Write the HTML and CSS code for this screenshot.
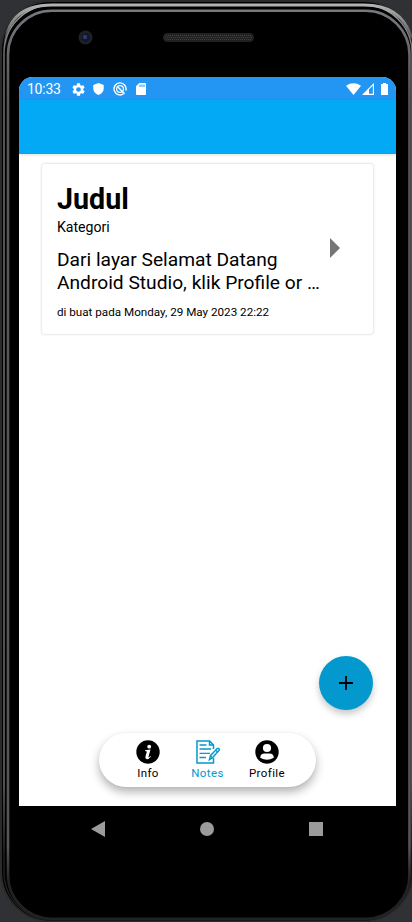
FILE: index.html
```
<!DOCTYPE html>
<html lang="id">
<head>
<meta charset="utf-8">
<meta name="viewport" content="width=device-width">
<title>Notes</title>
<link rel="stylesheet" href="styles.css">
</head>
<body>
<div class="device">
  <svg class="frame" viewBox="0 0 412 922" fill="none">
    <defs>
      <linearGradient id="metal" x1="0" y1="0" x2="0" y2="1">
        <stop offset="0" stop-color="#b9bbbb"/><stop offset=".02" stop-color="#8a8c8c"/><stop offset=".05" stop-color="#777975"/><stop offset=".85" stop-color="#74756f"/><stop offset=".93" stop-color="#222"/><stop offset="1" stop-color="#1c1c1c"/>
      </linearGradient>
      <linearGradient id="inner" x1="0" y1="0" x2="0" y2="1">
        <stop offset="0" stop-color="#77787e"/><stop offset=".1" stop-color="#55565c"/><stop offset=".92" stop-color="#55565c"/><stop offset=".96" stop-color="#222"/><stop offset="1" stop-color="#222"/>
      </linearGradient>
      <linearGradient id="shine" gradientUnits="userSpaceOnUse" x1="0" y1="50" x2="0" y2="4">
        <stop offset="0" stop-color="#777975" stop-opacity="0"/><stop offset=".5" stop-color="#777979"/><stop offset="1" stop-color="#b4b6b6"/>
      </linearGradient>
    </defs>
    <rect x="1" y="1" width="412" height="920.5" rx="50" fill="#000" stroke="#2b2b2b" stroke-width="2"/>
    <rect x="4" y="5" width="408" height="915" rx="48" stroke="url(#metal)" stroke-width="1.4"/>
    <path d="M4.5 52Q5 5 52 5H364Q402 5 411.5 38" stroke="url(#shine)" stroke-width="2.8"/>
    <rect x="8" y="10.7" width="401.5" height="908" rx="44" stroke="url(#inner)" stroke-width="2.6"/>
    <circle cx="85.5" cy="37.5" r="7" fill="#202022"/>
    <circle cx="85.5" cy="37.5" r="4.2" fill="#10162d"/>
    <circle cx="85" cy="37" r="2.2" fill="#2b3a70"/>
    <rect x="163" y="33" width="91" height="9" rx="4.5" fill="#222"/>
    <path d="M166 35.5H251M165 37.5H252M166 39.5H251" stroke="#414141" stroke-dasharray="1 1"/>
  </svg>
  <main class="screen">
    <header class="statusbar">
      <span class="time">10:33</span>
      <svg class="gear" viewBox="2 2 20 20"><path fill="#fff" d="M19.14 12.94c.04-.3.06-.61.06-.94s-.02-.64-.07-.94l2.03-1.58a.49.49 0 0 0 .12-.61l-1.92-3.32a.49.49 0 0 0-.59-.22l-2.39.96a7 7 0 0 0-1.62-.94l-.36-2.54A.48.48 0 0 0 13.92 2.4h-3.84a.48.48 0 0 0-.48.41l-.36 2.54c-.59.24-1.13.57-1.62.94l-2.39-.96a.48.48 0 0 0-.59.22L2.74 8.87a.48.48 0 0 0 .12.61l2.03 1.58a6 6 0 0 0-.02 1.88l-2.03 1.58a.49.49 0 0 0-.12.61l1.92 3.32c.12.22.37.29.59.22l2.39-.96c.5.38 1.03.7 1.62.94l.36 2.54c.05.24.24.41.48.41h3.84c.24 0 .44-.17.47-.41l.36-2.54a7 7 0 0 0 1.62-.94l2.39.96c.22.08.47 0 .59-.22l1.92-3.32a.48.48 0 0 0-.12-.61zM12 15.6a3.6 3.6 0 1 1 0-7.2 3.6 3.6 0 0 1 0 7.2"/></svg>
      <svg class="shield" viewBox="0 0 11 12"><path fill="#fff" d="M5.5 0 10.7 2V5.5C10.7 8.5 8.5 11 5.5 12 2.5 11 .3 8.5.3 5.5V2z"/></svg>
      <svg class="debug" viewBox="0 0 14 14" fill="none" stroke="#fff"><path stroke-width="1.4" d="M10.5 11.8A6 6 0 1 1 12.8 8.5"/><circle cx="7" cy="7" r="3.4" stroke-width="1.2"/><path stroke-width="1.5" d="m4.6 4.7 7 7"/></svg>
      <svg class="card-icon" viewBox="0 0 10 12"><path fill="#fff" d="M3.3 0H9q1 0 1 1v10q0 1-1 1H1q-1 0-1-1V3.3z"/><path stroke="#2396f3" d="M4 1.5V4M6 1.5V4M8 1.5V4"/></svg>
      <span class="spacer"></span>
      <svg class="wifi" viewBox="0 0 15 12"><path fill="#fff" d="M0 2.7Q7.5-2 15 2.7L7.5 12z"/></svg>
      <svg class="signal" viewBox="0 0 12 12"><path fill="none" stroke="#fff" stroke-width="1.1" d="M1.3 11.4H11.4V1.3z"/><path fill="#fff" d="M1 11.5 7 5.5v6z"/></svg>
      <svg class="battery" viewBox="0 0 7 12"><path fill="#fff" d="M2 0h3v1h2v11H0V1h2z"/></svg>
    </header>
    <div class="appbar"></div>
    <section class="content">
      <article class="note">
        <div class="note-text">
          <h1>Judul</h1>
          <p class="category">Kategori</p>
          <p class="excerpt">Dari layar Selamat Datang<br>Android Studio, klik Profile or …</p>
          <p class="date">di buat pada Monday, 29 May 2023 22:22</p>
        </div>
        <svg class="arrow" viewBox="0 0 10 20"><path fill="#757575" d="M0 0 10 10 0 20z"/></svg>
      </article>
      <button class="fab" aria-label="Tambah"><svg viewBox="0 0 14 14"><path stroke="#000" stroke-width="1.8" d="M0 7H14M7 0V14"/></svg></button>
      <nav class="tabs">
        <a class="tab"><svg viewBox="0 0 24 24"><circle cx="12" cy="12" r="11.7"/><g fill="#fff"><circle cx="13.2" cy="6.7" r="1.9"/><path d="M9 10.2 14.5 9.5 12.5 16.7Q12.3 17.7 13.1 17.2L14.5 15.9 15 16.4Q12.6 19.5 10.4 19.1 8.8 18.6 9.5 16.3L10.7 12.2Q11 11 9 11z"/></g></svg><span>Info</span></a>
        <a class="tab active"><svg viewBox="0 0 24 24" fill="none" stroke="#0398ce"><path stroke-width="1.5" d="M17.5 9V5L13.7.9H1V22.9H17.5V18M13.5 1V5H17.5"/><path stroke-width="1.3" d="M3.5 5H10.5M3.5 9H15M3.5 13.3H14M3.5 17.5H10"/><path fill="#fff" stroke-width="1.4" d="m13.4 19.7 1-4 6.8-7.1q1-.6 1.7.1.8.9 0 1.8l-6.4 7.3z"/><path stroke-width="1.3" d="m14.3 15.8 2.3 2M19.7 10.2l2 1.9"/></svg><span>Notes</span></a>
        <a class="tab"><svg viewBox="0 0 24 24"><circle cx="12" cy="12" r="11.7"/><g fill="#fff"><circle cx="12" cy="8" r="4.1"/><path d="M5.2 17.7Q5.5 13.5 9.5 13.5H14.5Q18.5 13.5 18.8 17.7 12 22 5.2 17.7"/></g></svg><span>Profile</span></a>
      </nav>
    </section>
  </main>
  <footer class="navbar">
    <svg viewBox="0 0 16 16"><path d="M1 8 15 0V16z"/></svg>
    <svg viewBox="0 0 16 16"><circle cx="8" cy="8" r="7"/></svg>
    <svg viewBox="0 0 16 16"><path d="M1 1H15V15H1z"/></svg>
  </footer>
</div>
</body>
</html>
```
FILE: styles.css
```
* { box-sizing: border-box; }
body { margin: 0; background: #303134; font-family: Roboto, sans-serif; color: #000; }
h1, p { margin: 0; }
svg { display: block; flex: none; }
.device { position: relative; width: 412px; height: 922px; padding: 77px 16px 0 19px; overflow: hidden; }
.frame { position: absolute; left: 0; top: 0; width: 412px; height: 922px; }
.screen { position: relative; height: 729px; background: #fff; border-radius: 14px 14px 0 0; overflow: hidden; display: flex; flex-direction: column; }
.statusbar { height: 23px; background: #2396f3; display: flex; align-items: center; padding: 1px 8px 0; color: #fff; flex: none; }
.time { font-size: 14px; letter-spacing: -.25px; line-height: 22px; width: 44.5px; white-space: nowrap; }
.gear { width: 13px; height: 13px; }
.shield { width: 11px; height: 12px; margin-left: 8px; }
.debug { width: 14px; height: 14px; margin-left: 9px; }
.card-icon { width: 10px; height: 12px; margin-left: 9.5px; }
.spacer { flex: 1; }
.wifi { width: 15px; height: 12px; }
.signal { width: 12px; height: 12px; margin-left: 1px; }
.battery { width: 7px; height: 12px; margin-left: 7px; }
.appbar { height: 54px; flex: none; background: #04a9f5; box-shadow: 0 1px 3px rgba(0, 0, 0, .14); }
.content { flex: 1; display: flex; flex-direction: column; padding: 9px 22px 19px; }
.note { height: 172px; border: 1px solid #ececec; border-radius: 4px; box-shadow: 0 0 2px rgba(0, 0, 0, .1); padding: 17px 33px 0 15px; display: flex; justify-content: space-between; }
.note-text { white-space: nowrap; }
h1 { font-size: 28.7px; line-height: 36px; font-weight: 700; }
.category { font-size: 14.1px; line-height: 18px; margin-top: 1px; }
.excerpt { font-size: 19.2px; line-height: 22.5px; margin-top: 13px; }
.date { font-size: 11.66px; line-height: 16px; margin-top: 10px; }
.arrow { width: 10px; height: 20px; margin-top: 57px; }
.fab { width: 54px; height: 54px; margin: auto 1px 23px auto; border: 0; padding: 0; border-radius: 50%; background: #0398ce; display: grid; place-items: center; box-shadow: 0 4px 7px rgba(0, 0, 0, .22); }
.fab svg { width: 14px; height: 14px; }
.tabs { width: 217px; height: 54px; flex: none; margin-left: 58px; border-radius: 27px; background: #fff; box-shadow: 0 5px 10px rgba(0, 0, 0, .3), 0 0 2px rgba(0, 0, 0, .05); display: flex; justify-content: center; padding: 7px 0 0; }
.tab { width: 59.5px; display: flex; flex-direction: column; align-items: center; font-size: 11.5px; line-height: 15px; letter-spacing: .4px; }
.tab svg { width: 24px; height: 24px; margin-bottom: 2px; }
.active { color: #0398ce; }
.navbar { position: relative; height: 46px; display: flex; justify-content: space-between; align-items: center; padding: 0 72px 0 70.5px; }
.navbar svg { width: 16px; height: 16px; fill: #9b9b9b; }
```
